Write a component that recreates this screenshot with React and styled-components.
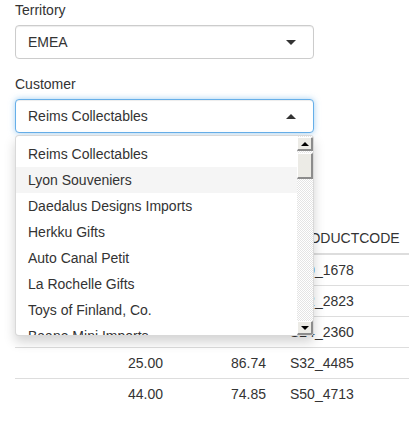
import React from 'react';
import styled, { createGlobalStyle } from 'styled-components';

const GlobalStyle = createGlobalStyle`
  html, body {
    margin: 0;
    padding: 0;
    background: #fff;
    overflow: hidden;
  }
  body {
    font-family: "Liberation Sans", Helvetica, Arial, sans-serif;
    font-size: 14px;
    line-height: 20px;
    color: #333;
  }
`;

const Page = styled.div`
  padding-left: 15px;
`;

const FormGroup = styled.div`
  position: relative;
  width: 299px;
  margin-bottom: 15px;
`;

const Label = styled.label`
  display: block;
  font-weight: 400;
  margin-bottom: 5px;
`;

const SelectBox = styled.div`
  box-sizing: border-box;
  height: 34px;
  display: flex;
  align-items: center;
  justify-content: space-between;
  padding: 0 17px 0 12px;
  border: 1px solid ${(p) => (p.$open ? '#66afe9' : '#ccc')};
  border-radius: 4px;
  background: #fff;
  box-shadow: ${(p) =>
    p.$open
      ? 'inset 0 1px 1px rgba(0,0,0,.075), 0 0 6px rgba(102,175,233,.6)'
      : 'inset 0 1px 1px rgba(0,0,0,.075)'};
`;

const Caret = styled.span`
  width: 0;
  height: 0;
  border-left: 5px solid transparent;
  border-right: 5px solid transparent;
  ${(p) =>
    p.$up ? 'border-bottom: 5px solid #333;' : 'border-top: 5px solid #333;'}
`;

const Dropdown = styled.div`
  position: absolute;
  top: calc(100% + 2px);
  left: 0;
  right: 0;
  z-index: 10;
  box-sizing: border-box;
  height: 201px;
  overflow: hidden;
  background: #fff;
  border: 1px solid rgba(0, 0, 0, 0.15);
  border-radius: 4px;
  box-shadow: 0 6px 12px rgba(0, 0, 0, 0.175);
`;

const OptionList = styled.ul`
  list-style: none;
  margin: 0;
  padding: 5px 16px 0 0;
`;

const Option = styled.li`
  padding: 3px 12px;
  white-space: nowrap;
  background: ${(p) => (p.$hover ? '#f5f5f5' : 'transparent')};
`;

const ScrollBar = styled.div`
  position: absolute;
  top: 0;
  right: 0;
  bottom: 0;
  width: 16px;
  display: flex;
  flex-direction: column;
  justify-content: space-between;
  padding-top: 1px;
  box-sizing: border-box;
  background-color: #fff;
  background-image: repeating-conic-gradient(#e4e4e4 0 25%, #fff 0 50%);
  background-size: 2px 2px;
`;

const ScrollButton = styled.div`
  box-sizing: border-box;
  width: 16px;
  height: ${(p) => p.$h || 14}px;
  display: flex;
  align-items: center;
  justify-content: center;
  background: #ecebe6;
  border-top: 1px solid #fff;
  border-left: 1px solid #fff;
  border-right: 2px solid #8c8c8c;
  border-bottom: 2px solid #8c8c8c;
`;

const ScrollTop = styled.div`
  display: flex;
  flex-direction: column;
  gap: 2px;
`;

const Arrow = styled.span`
  width: 0;
  height: 0;
  border-left: 4px solid transparent;
  border-right: 4px solid transparent;
  ${(p) =>
    p.$up ? 'border-bottom: 4px solid #000;' : 'border-top: 4px solid #000;'}
`;

const Table = styled.div`
  margin-top: 90px;
`;

const Row = styled.div`
  display: grid;
  grid-template-columns: 153px 117px 1fr;
  min-height: 30px;
  border-top: ${(p) => (p.$first ? 'none' : '1px solid #ddd')};
  border-bottom: ${(p) => (p.$head ? '2px solid #ddd' : 'none')};
`;

const Cell = styled.div`
  padding: 5px;
  white-space: nowrap;
  text-align: ${(p) => (p.$num ? 'right' : 'left')};
  ${(p) => p.$num && p.$wide && 'padding-right: 19px;'}
`;

const customers = [
  'Reims Collectables',
  'Lyon Souveniers',
  'Daedalus Designs Imports',
  'Herkku Gifts',
  'Auto Canal Petit',
  'La Rochelle Gifts',
  'Toys of Finland, Co.',
  'Baane Mini Imports',
];

// first three rows sit behind the open dropdown
const rows = [
  ['', '', 'S10_1678'],
  ['', '', 'S12_2823'],
  ['', '', 'S24_2360'],
  ['25.00', '86.74', 'S32_4485'],
  ['44.00', '74.85', 'S50_4713'],
];

export default function App() {
  return (
    <Page>
      <GlobalStyle />
      <FormGroup>
        <Label>Territory</Label>
        <SelectBox>
          <span>EMEA</span>
          <Caret />
        </SelectBox>
      </FormGroup>
      <FormGroup>
        <Label>Customer</Label>
        <SelectBox $open>
          <span>Reims Collectables</span>
          <Caret $up />
        </SelectBox>
        <Dropdown>
          <OptionList>
            {customers.map((c, i) => (
              <Option key={c} $hover={i === 1}>
                {c}
              </Option>
            ))}
          </OptionList>
          <ScrollBar>
            <ScrollTop>
              <ScrollButton>
                <Arrow $up />
              </ScrollButton>
              <ScrollButton $h={26} />
            </ScrollTop>
            <ScrollButton>
              <Arrow />
            </ScrollButton>
          </ScrollBar>
        </Dropdown>
      </FormGroup>
      <Table>
        <Row $head $first>
          <Cell $num />
          <Cell $num $wide />
          <Cell>PRODUCTCODE</Cell>
        </Row>
        {rows.map((r, i) => (
          <Row key={r[2]} $first={i === 0}>
            <Cell $num>{r[0]}</Cell>
            <Cell $num $wide>{r[1]}</Cell>
            <Cell>{r[2]}</Cell>
          </Row>
        ))}
      </Table>
    </Page>
  );
}
